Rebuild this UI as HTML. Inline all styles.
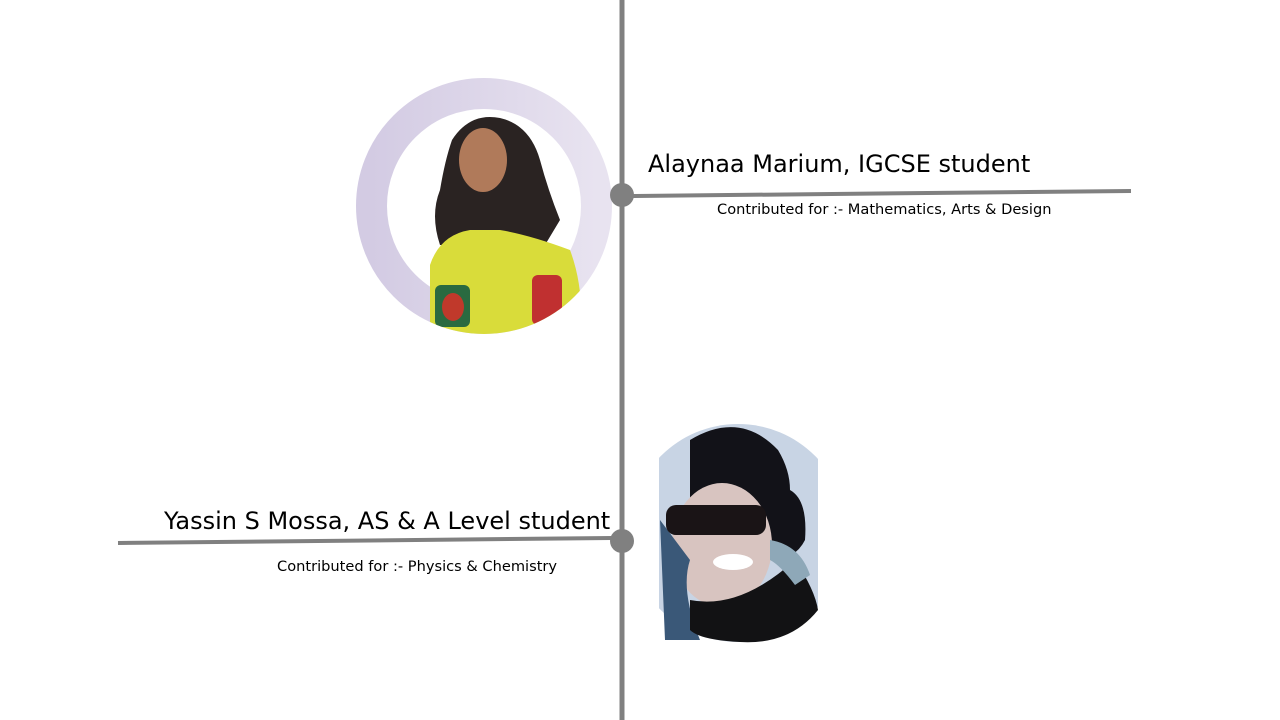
<!DOCTYPE html>
<html><head><meta charset="utf-8"><style>
body{margin:0;width:1280px;height:720px;background:#fff;position:relative;overflow:hidden;font-family:"DejaVu Sans","Liberation Sans",sans-serif;color:#000}
.t{position:absolute;white-space:nowrap}
</style></head><body>
<svg width="1280" height="720" style="position:absolute;left:0;top:0">
<defs>
<linearGradient id="rg" x1="0" x2="1"><stop offset="0" stop-color="#d3cbe3"/><stop offset="1" stop-color="#e8e3f0"/></linearGradient>
<clipPath id="c1"><circle cx="484" cy="206" r="128"/></clipPath>
<clipPath id="c2"><path d="M659 420 H818 V650 H659 Z"/></clipPath>
</defs>
<circle cx="484" cy="206" r="112.5" fill="none" stroke="url(#rg)" stroke-width="31"/>
<g clip-path="url(#c1)">
<path d="M452 140 Q470 112 500 118 Q530 125 540 160 Q548 190 560 220 L545 245 L440 245 Q430 215 440 190 Q445 160 452 140Z" fill="#2a2322"/>
<ellipse cx="483" cy="160" rx="24" ry="32" fill="#b07a5a"/>
<path d="M430 265 Q440 235 470 230 L500 230 Q530 235 570 250 Q585 290 580 340 L430 340 Z" fill="#d9dc3a"/>
<rect x="435" y="285" width="35" height="42" rx="6" fill="#2a6a40"/>
<ellipse cx="453" cy="307" rx="11" ry="14" fill="#c0392b"/>
<rect x="532" y="275" width="30" height="50" rx="6" fill="#c03030"/>
</g>
<g clip-path="url(#c2)">
<circle cx="738" cy="533" r="109" fill="#c8d4e4"/>
<path d="M690 440 Q740 410 778 450 Q790 470 790 490 Q808 500 805 540 Q795 560 770 560 L690 520 Z" fill="#121218"/>
<ellipse cx="722" cy="545" rx="50" ry="62" fill="#d8c4c0"/>
<path d="M660 520 L665 640 L700 640 Q680 590 690 560 Z" fill="#3a5878"/>
<rect x="666" y="505" width="100" height="30" rx="10" fill="#1a1416"/>
<path d="M690 600 Q740 610 795 560 Q815 590 818 610 Q790 645 740 642 Q700 640 690 630 Z" fill="#121214"/>
<path d="M770 540 Q800 545 810 575 L795 585 Q780 565 770 560Z" fill="#8ea8b8"/>
<ellipse cx="733" cy="562" rx="20" ry="8" fill="#fff"/>
</g>
<line x1="622" y1="0" x2="622" y2="720" stroke="#808080" stroke-width="5"/>
<line x1="632" y1="196" x2="1131" y2="191" stroke="#808080" stroke-width="4"/>
<line x1="118" y1="543" x2="612" y2="538" stroke="#808080" stroke-width="4"/>
<circle cx="622" cy="195" r="12" fill="#808080"/>
<circle cx="622" cy="541" r="12" fill="#808080"/>
</svg>
<div class="t" style="left:648px;top:150px;font-size:24px">Alaynaa Marium, IGCSE student</div>
<div class="t" style="left:717px;top:201px;font-size:14.6px">Contributed for :- Mathematics, Arts &amp; Design</div>
<div class="t" style="left:164px;top:507px;font-size:24px">Yassin S Mossa, AS &amp; A Level student</div>
<div class="t" style="left:277px;top:558px;font-size:14.6px">Contributed for :- Physics &amp; Chemistry</div>
</body></html>
